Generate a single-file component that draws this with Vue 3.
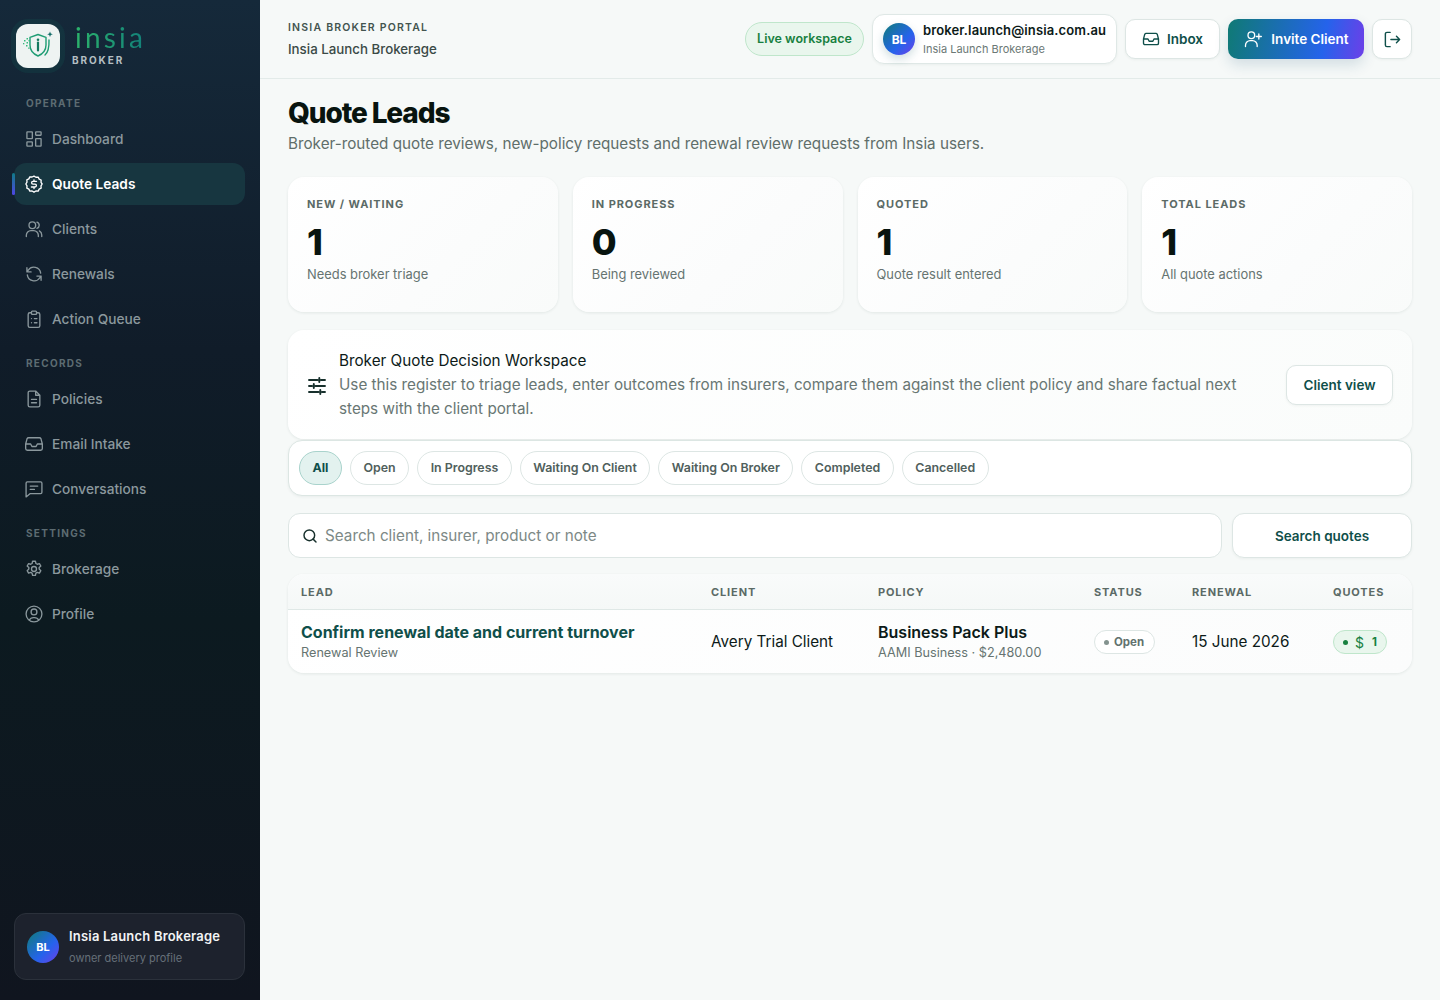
<script setup>
const navSections = [
  { label: 'OPERATE', items: [
    { name: 'Dashboard', icon: 'dash' },
    { name: 'Quote Leads', icon: 'dollar', active: true },
    { name: 'Clients', icon: 'users' },
    { name: 'Renewals', icon: 'refresh' },
    { name: 'Action Queue', icon: 'clip' },
  ]},
  { label: 'RECORDS', items: [
    { name: 'Policies', icon: 'file' },
    { name: 'Email Intake', icon: 'inbox' },
    { name: 'Conversations', icon: 'chat' },
  ]},
  { label: 'SETTINGS', items: [
    { name: 'Brokerage', icon: 'gear' },
    { name: 'Profile', icon: 'user' },
  ]},
]
const icons = {
  dash: 'M4 3.500h5.500a.5.5 0 0 1 .5.5v7a.5.5 0 0 1-.5.5H4a.5.5 0 0 1-.5-.5V4a.5.5 0 0 1 .5-.5ZM14.500 3.500H20a.5.5 0 0 1 .5.5v3a.5.5 0 0 1-.5.5h-5.500A.5.5 0 0 1 14 7V4a.5.5 0 0 1 .5-.5ZM14.500 11.500H20a.5.5 0 0 1 .5.5v8a.5.5 0 0 1-.5.5h-5.500a.5.5 0 0 1-.5-.5v-8a.5.5 0 0 1 .5-.5ZM4 15.500h5.500a.5.5 0 0 1 .5.5v4a.5.5 0 0 1-.5.5H4a.5.5 0 0 1-.5-.5v-4a.5.5 0 0 1 .5-.5Z',
  dollar: 'M12 2.500l2.300 1.400 2.700-.2 1.200 2.400 2.400 1.200-.2 2.700L21.800 12l-1.400 2.300.2 2.700-2.400 1.200-1.200 2.400-2.700-.2L12 21.800l-2.300-1.400-2.700.2-1.200-2.400-2.400-1.200.2-2.700L2.200 12l1.400-2.300-.2-2.700 2.400-1.200L7 3.400l2.700.2L12 2.500ZM15 8.800h-4.200a1.700 1.700 0 0 0 0 3.400h2.400a1.700 1.700 0 0 1 0 3.400H8.900M12 7v1.800M12 15.600v1.800',
  users: 'M10 11.500a4 4 0 1 0 0-8 4 4 0 0 0 0 8ZM2.800 21v-1.500a5.500 5.500 0 0 1 5.500-5.500h3.400a5.500 5.500 0 0 1 5.500 5.500V21M15.500 3.700a4 4 0 0 1 0 7.600M18.500 14.300a5.500 5.500 0 0 1 2.800 4.800V21',
  refresh: 'M20 11A8.200 8.200 0 0 0 5 7.500L3.500 9.500M3.500 4.500v5h5M4 13a8.200 8.200 0 0 0 15 3.500l1.500-2M20.500 19.500v-5h-5',
  clip: 'M9 4.500H7a2 2 0 0 0-2 2V20a2 2 0 0 0 2 2h10a2 2 0 0 0 2-2V6.500a2 2 0 0 0-2-2h-2M10 2.500h4a1 1 0 0 1 1 1v2a1 1 0 0 1-1 1h-4a1 1 0 0 1-1-1v-2a1 1 0 0 1 1-1ZM9 11.500h.01M9 16.500h.01M12.500 11.500H15.500M12.500 16.500H15.500',
  file: 'M14 2.500H7a2 2 0 0 0-2 2V19.500a2 2 0 0 0 2 2h10a2 2 0 0 0 2-2V7.500l-5-5ZM14 2.500v5h5M9 12.500h6M9 16.500h6',
  inbox: 'M5.500 4.500h13a2 2 0 0 1 1.800 1.100L22 12v5.500a2 2 0 0 1-2 2H4a2 2 0 0 1-2-2V12l1.700-6.400a2 2 0 0 1 1.800-1.100ZM2 12h6l1.500 3h5L16 12h6',
  chat: 'M4 3.500h16a1.500 1.500 0 0 1 1.500 1.500v11a1.500 1.500 0 0 1-1.500 1.500H7.500L2.500 21.500V5A1.500 1.500 0 0 1 4 3.500ZM7.500 8.500h9M7.500 12.500h5',
  gear: 'M12 15a3 3 0 1 0 0-6 3 3 0 0 0 0 6ZM10.300 2.700h3.400l.6 2.700 1.600.9 2.600-.8 1.700 2.900-2 1.900v1.800l2 1.900-1.700 2.900-2.600-.8-1.600.9-.6 2.700h-3.400l-.6-2.700-1.600-.9-2.600.8-1.700-2.900 2-1.900v-1.800l-2-1.900 1.700-2.900 2.600.8 1.600-.9.600-2.700Z',
  user: 'M12 21.500a9.500 9.500 0 1 0 0-19 9.500 9.500 0 0 0 0 19ZM12 13a3.500 3.500 0 1 0 0-7 3.500 3.500 0 0 0 0 7ZM6.200 19.500a6 6 0 0 1 5.300-3.200h1a6 6 0 0 1 5.300 3.200',
}
const stats = [
  { label: 'NEW / WAITING', value: '1', note: 'Needs broker triage' },
  { label: 'IN PROGRESS', value: '0', note: 'Being reviewed' },
  { label: 'QUOTED', value: '1', note: 'Quote result entered' },
  { label: 'TOTAL LEADS', value: '1', note: 'All quote actions' },
]
const filters = ['All', 'Open', 'In Progress', 'Waiting On Client', 'Waiting On Broker', 'Completed', 'Cancelled']
</script>

<template>
  <div class="shell">
    <aside class="sidebar">
      <div class="brand">
        <div class="logo-box">
          <svg width="34" height="34" viewBox="0 0 34 34" fill="none">
            <path d="M17 5.500l8 2.800v7.700c0 5-3.300 9-8 11-4.700-2-8-6-8-11V8.300l8-2.800Z" stroke="#1f9d74" stroke-width="1.400" stroke-linejoin="round"/>
            <path d="M24 26c3-2.500 4.300-6.500 4-15" stroke="#1f9d74" stroke-width="1.400" stroke-linecap="round"/>
            <path d="M17 13.500v8" stroke="#14795f" stroke-width="2.200" stroke-linecap="round"/>
            <circle cx="17" cy="10.800" r="1.300" fill="#14795f"/>
            <path d="M29 2.500l.8 2 2 .8-2 .8-.8 2-.8-2-2-.8 2-.8.800-2Z" fill="#136d69"/>
            <g fill="#35b97c"><rect x="3" y="11" width="1.500" height="1.500"/><rect x="5.500" y="9" width="1.500" height="1.500"/><rect x="5.500" y="13" width="1.500" height="1.500"/><rect x="2" y="14" width="1.300" height="1.300"/><rect x="5" y="16" width="1.500" height="1.500"/><rect x="7.200" y="18.500" width="1.300" height="1.300"/><rect x="7.500" y="11" width="1.300" height="1.300"/></g>
          </svg>
        </div>
        <div class="brand-text">
          <span class="wordmark">insia</span>
          <span class="brand-sub">BROKER</span>
        </div>
      </div>

      <nav class="nav">
        <section v-for="s in navSections" :key="s.label" class="nav-section">
          <div class="nav-label">{{ s.label }}</div>
          <a v-for="i in s.items" :key="i.name" class="nav-item" :class="{ active: i.active }">
            <svg class="nav-icon" width="20" height="20" viewBox="0 0 24 24" fill="none" stroke="currentColor" stroke-width="1.600" stroke-linecap="round" stroke-linejoin="round"><path :d="icons[i.icon]"/></svg>
            <span>{{ i.name }}</span>
          </a>
        </section>
      </nav>

      <div class="side-foot">
        <div class="avatar small">BL</div>
        <div class="foot-text">
          <div class="foot-name">Insia Launch Brokerage</div>
          <div class="foot-sub">owner delivery profile</div>
        </div>
      </div>
    </aside>

    <div class="content">
      <header class="topbar">
        <div class="top-left">
          <div class="eyebrow">INSIA BROKER PORTAL</div>
          <div class="top-org">Insia Launch Brokerage</div>
        </div>
        <div class="top-right">
          <span class="live">Live workspace</span>
          <div class="user-chip">
            <div class="avatar">BL</div>
            <div>
              <div class="chip-mail">broker.launch@insia.com.au</div>
              <div class="chip-org">Insia Launch Brokerage</div>
            </div>
          </div>
          <button class="btn inbox">
            <svg width="18" height="18" viewBox="0 0 24 24" fill="none" stroke="currentColor" stroke-width="1.800" stroke-linecap="round" stroke-linejoin="round"><path :d="icons.inbox"/></svg>
            Inbox
          </button>
          <button class="btn invite">
            <svg width="20" height="20" viewBox="0 0 24 24" fill="none" stroke="currentColor" stroke-width="1.600" stroke-linecap="round" stroke-linejoin="round"><path d="M10 11.500a4 4 0 1 0 0-8 4 4 0 0 0 0 8ZM3 21v-1.500A5.500 5.500 0 0 1 8.500 14h3a5.500 5.500 0 0 1 5.500 5.500V21M19 6v6M16 9h6"/></svg>
            Invite Client
          </button>
          <button class="btn logout" aria-label="Sign out">
            <svg width="19" height="19" viewBox="0 0 24 24" fill="none" stroke="currentColor" stroke-width="1.800" stroke-linecap="round" stroke-linejoin="round"><path d="M9 3H5a2 2 0 0 0-2 2v14a2 2 0 0 0 2 2h4M10 12h11M17 8l4 4-4 4"/></svg>
          </button>
        </div>
      </header>

      <main class="main">
        <h1 class="title">Quote Leads</h1>
        <p class="subtitle">Broker-routed quote reviews, new-policy requests and renewal review requests from Insia users.</p>

        <div class="stats">
          <div v-for="s in stats" :key="s.label" class="stat">
            <div class="stat-label">{{ s.label }}</div>
            <div class="stat-value">{{ s.value }}</div>
            <div class="stat-note">{{ s.note }}</div>
          </div>
        </div>

        <div class="decision">
          <svg class="sliders" width="18" height="18" viewBox="0 0 18 18" fill="none" stroke="#17302c" stroke-width="1.900" stroke-linecap="round"><path d="M1 3h8.500M13 3h4M11.300 1v4M1 9h3M7.500 9h9.500M5.800 7v4M1 15h9.500M14 15h3M12.300 13v4"/></svg>
          <div class="decision-text">
            <div class="decision-title">Broker Quote Decision Workspace</div>
            <div class="decision-body">Use this register to triage leads, enter outcomes from insurers, compare them against the client policy and share factual next steps with the client portal.</div>
          </div>
          <button class="btn client-view">Client view</button>
        </div>

        <div class="filters">
          <span v-for="(f, n) in filters" :key="f" class="filter" :class="{ on: n === 0 }">{{ f }}</span>
        </div>

        <div class="search-row">
          <label class="search">
            <svg width="16" height="16" viewBox="0 0 24 24" fill="none" stroke="#17302c" stroke-width="2.200" stroke-linecap="round"><circle cx="11" cy="11" r="8"/><path d="M21 21l-4.300-4.300"/></svg>
            <input placeholder="Search client, insurer, product or note" />
          </label>
          <button class="btn search-btn">Search quotes</button>
        </div>

        <div class="table">
          <div class="row head">
            <div>LEAD</div><div>CLIENT</div><div>POLICY</div><div>STATUS</div><div>RENEWAL</div><div>QUOTES</div>
          </div>
          <div class="row body">
            <div>
              <div class="lead-title">Confirm renewal date and current turnover</div>
              <div class="cell-sub">Renewal Review</div>
            </div>
            <div class="cell">Avery Trial Client</div>
            <div>
              <div class="policy">Business Pack Plus</div>
              <div class="cell-sub">AAMI Business · $2,480.00</div>
            </div>
            <div><span class="pill open"><i class="dot"></i>Open</span></div>
            <div class="cell">15 June 2026</div>
            <div><span class="pill quotes"><i class="dot"></i><b class="usd">$</b>1</span></div>
          </div>
        </div>
      </main>
    </div>
  </div>
</template>

<style>
html, body { margin: 0; background: #f6f9f8; }
</style>

<style scoped>
* { box-sizing: border-box; }
.shell { display: flex; min-height: 1000px; font-family: Inter, "Liberation Sans", sans-serif; color: #0c1a18; background: #f6f9f8; }
.sidebar { width: 260px; flex: none; height: 1000px; display: flex; flex-direction: column; padding: 24px 15px 20px 14px; background: linear-gradient(180deg, #15293a 0%, #101c29 35%, #0c1a20 62%, #10151f 100%); }
.brand { display: flex; align-items: center; gap: 12px; margin-left: 2px; height: 44px; }
.logo-box { width: 44px; height: 44px; border-radius: 12px; background: #eef3f2; box-shadow: 0 0 0 5px rgba(20, 90, 85, .22); display: flex; align-items: center; justify-content: center; }
.brand-text { display: flex; flex-direction: column; }
.wordmark { font-family: Lato, sans-serif; font-weight: 400; font-size: 28px; line-height: 24px; letter-spacing: 3.200px; margin-left: 3px; margin-top: -1px; background: linear-gradient(90deg, #2cb36b, #12807a); -webkit-background-clip: text; background-clip: text; color: transparent; }
.brand-sub { font-size: 10px; font-weight: 700; line-height: 12px; letter-spacing: .19em; color: #b4bfc3; margin-top: 5px; }
.nav { display: flex; flex-direction: column; gap: 17px; margin-top: 29px; }
.nav-section { display: flex; flex-direction: column; gap: 3px; }
.nav-label { font-size: 10px; font-weight: 700; line-height: 12px; letter-spacing: .13em; color: #5d6c72; padding-left: 12px; margin-bottom: 6px; }
.nav-item { position: relative; height: 42px; display: flex; align-items: center; gap: 8px; padding-left: 10px; border-radius: 12px; font-size: 13.700px; font-weight: 500; color: #8b989d; }
.nav-item.active { background: #173640; color: #fff; font-weight: 600; }
.nav-item.active::before { content: ""; position: absolute; left: -2px; top: 10px; width: 3px; height: 22px; border-radius: 2px; background: linear-gradient(180deg, #0f7c86, #4f46e5); }
.nav-icon { flex: none; }
.side-foot { margin-top: auto; height: 67px; display: flex; align-items: center; gap: 10px; padding: 0 12px; border-radius: 12px; background: #1d222d; border: 1px solid #2b313b; }
.foot-text { padding-bottom: 2px; }
.foot-name { font-size: 13px; font-weight: 600; color: #f2f4f5; line-height: 18px; letter-spacing: .015em; }
.foot-sub { font-size: 11px; color: #667079; line-height: 14px; margin-top: 6px; }
.avatar { width: 32px; height: 32px; border-radius: 50%; flex: none; display: flex; align-items: center; justify-content: center; color: #fff; font-size: 12px; font-weight: 700; background: linear-gradient(135deg, #0f7c78, #2563eb 60%, #6d3fe8); box-shadow: 0 4px 10px rgba(20, 90, 100, .2); }
.avatar.small { font-size: 11px; box-shadow: none; }

.content { flex: 1; min-width: 0; }
.topbar { height: 79px; border-bottom: 1px solid #e3ebe9; padding: 0 28px; display: flex; align-items: center; justify-content: space-between; }
.eyebrow { font-size: 10.500px; font-weight: 600; letter-spacing: .115em; color: #43544f; line-height: 14px; margin-top: 1px; }
.top-org { font-size: 13.300px; color: #3a4a46; line-height: 18px; margin-top: 5px; font-weight: 500; }
.top-right { display: flex; align-items: center; gap: 8px; }
.live { height: 34px; width: 119px; display: flex; align-items: center; justify-content: center; padding-bottom: 1px; border-radius: 17px; background: #e9f6ed; border: 1px solid #bfe6cb; color: #17803f; font-size: 12.500px; font-weight: 600; }
.user-chip { height: 50px; width: 245px; display: flex; align-items: center; gap: 8px; padding-left: 10px; background: #fff; border: 1px solid #dfe8e6; border-radius: 12px; box-shadow: 0 1px 3px rgba(20, 50, 45, .05); }
.chip-mail { font-size: 13px; font-weight: 600; color: #0c1a18; line-height: 17px; white-space: nowrap; letter-spacing: .01em; }
.chip-org { font-size: 11px; color: #6b7875; line-height: 14px; margin-top: 3px; }
.btn { display: flex; align-items: center; justify-content: center; gap: 8px; font-family: inherit; font-weight: 600; font-size: 13.500px; border-radius: 10px; background: #fff; border: 1px solid #dde6e4; color: #0f4f4a; height: 40px; padding: 0; box-shadow: 0 1px 3px rgba(20, 50, 45, .05); }
.inbox { width: 95px; gap: 7px; }
.invite { width: 136px; border: 0; color: #fff; background: linear-gradient(100deg, #0f7a74, #2563eb 70%, #6d3fe8); box-shadow: 0 6px 14px rgba(25, 80, 120, .16); }
.logout { width: 40px; }

.main { padding: 15px 28px 0; }
.title { margin: 0; font-size: 28px; font-weight: 800; letter-spacing: -.04em; line-height: 38px; color: #08140f; }
.subtitle { margin: 0; font-size: 15.250px; line-height: 24px; color: #5f6e6a; }
.stats { display: grid; grid-template-columns: repeat(4, 1fr); gap: 15px; margin-top: 21px; }
.stat { height: 135px; padding: 20px 19px; border-radius: 16px; background: linear-gradient(135deg, #fff, #fbfcfc 60%, #f9fbfa); box-shadow: 0 1px 3px rgba(20, 50, 45, .09); }
.stat-label { font-size: 11px; font-weight: 700; letter-spacing: .085em; line-height: 14px; color: #5b6a66; }
.stat-value { font-size: 36px; font-weight: 800; line-height: 44px; margin-top: 9px; color: #08140f; }
.stat-note { font-size: 12.900px; line-height: 18px; color: #667471; margin-top: 2px; }
.decision { display: flex; align-items: center; height: 109px; margin-top: 18px; padding: 0 19px 0 20px; border-radius: 16px; background: linear-gradient(135deg, #fff, #fafcfb); box-shadow: 0 1px 3px rgba(20, 50, 45, .09); }
.sliders { flex: none; margin-right: 13px; margin-top: 2px; }
.decision-text { flex: 1; min-width: 0; font-size: 15.250px; line-height: 24px; padding-right: 42px; }
.decision-title { color: #0c1a18; }
.decision-body { color: #687673; }
.client-view { width: 107px; flex: none; }
.filters { display: flex; gap: 8px; align-items: center; height: 56px; margin-top: 1px; padding: 0 10px 1px; border-radius: 14px; background: #fff; border: 1px solid #dce6e3; box-shadow: 0 1px 3px rgba(20, 50, 45, .06); }
.filter { height: 34px; display: flex; align-items: center; padding: 0 12.500px; border-radius: 17px; border: 1px solid #dde6e4; font-size: 12.400px; font-weight: 600; color: #50605c; }
.filter.on { background: #e3f2ef; border-color: #a9d3cc; color: #0f4f4a; font-weight: 700; }
.search-row { display: flex; gap: 10px; margin-top: 17px; }
.search { flex: 1; height: 45px; display: flex; align-items: center; gap: 7px; padding: 0 13px; background: #fff; border: 1px solid #dde6e4; border-radius: 12px; }
.search input { flex: 1; border: 0; outline: 0; font-family: inherit; font-size: 15.250px; color: #0c1a18; background: transparent; padding: 0 0 1px; }
.search input::placeholder { color: #7d8986; opacity: 1; }
.search-btn { width: 180px; height: 45px; border-radius: 12px; }
.table { margin-top: 16px; border-radius: 16px; background: linear-gradient(135deg, #fff, #fbfcfc); box-shadow: 0 1px 3px rgba(20, 50, 45, .09); }
.row { display: grid; grid-template-columns: 410px 167px 216px 98px 141px 1fr; padding-left: 13px; align-items: center; }
.head { height: 36px; border-bottom: 1px solid #dfe8e6; font-size: 11px; font-weight: 700; letter-spacing: .08em; color: #5b6a66; background: linear-gradient(180deg, #f9fbfb, #f5f8f7); border-radius: 16px 16px 0 0; }
.body { height: 63px; }
.lead-title { font-size: 16px; font-weight: 700; color: #0f4f4a; line-height: 21px; }
.cell-sub { font-size: 12.700px; line-height: 18px; color: #667471; margin-top: 1px; }
.cell { font-size: 15.250px; color: #0c1a18; }
.policy { font-size: 16px; font-weight: 600; line-height: 21px; color: #0c1a18; }
.pill { display: inline-flex; align-items: center; height: 24px; border-radius: 12px; font-size: 11.500px; font-weight: 700; }
.dot { width: 5px; height: 5px; border-radius: 50%; background: currentColor; }
.open { width: 61px; padding-left: 9px; gap: 5px; background: #fff; border: 1px solid #dde6e4; color: #62726e; }
.open .dot { background: #84938f; }
.quotes { width: 54px; padding-left: 9px; gap: 7px; background: #e9f6ed; border: 1px solid #bfe6cb; color: #17803f; }
.usd { font-weight: 400; font-size: 14px; margin-right: 1px; }
</style>
